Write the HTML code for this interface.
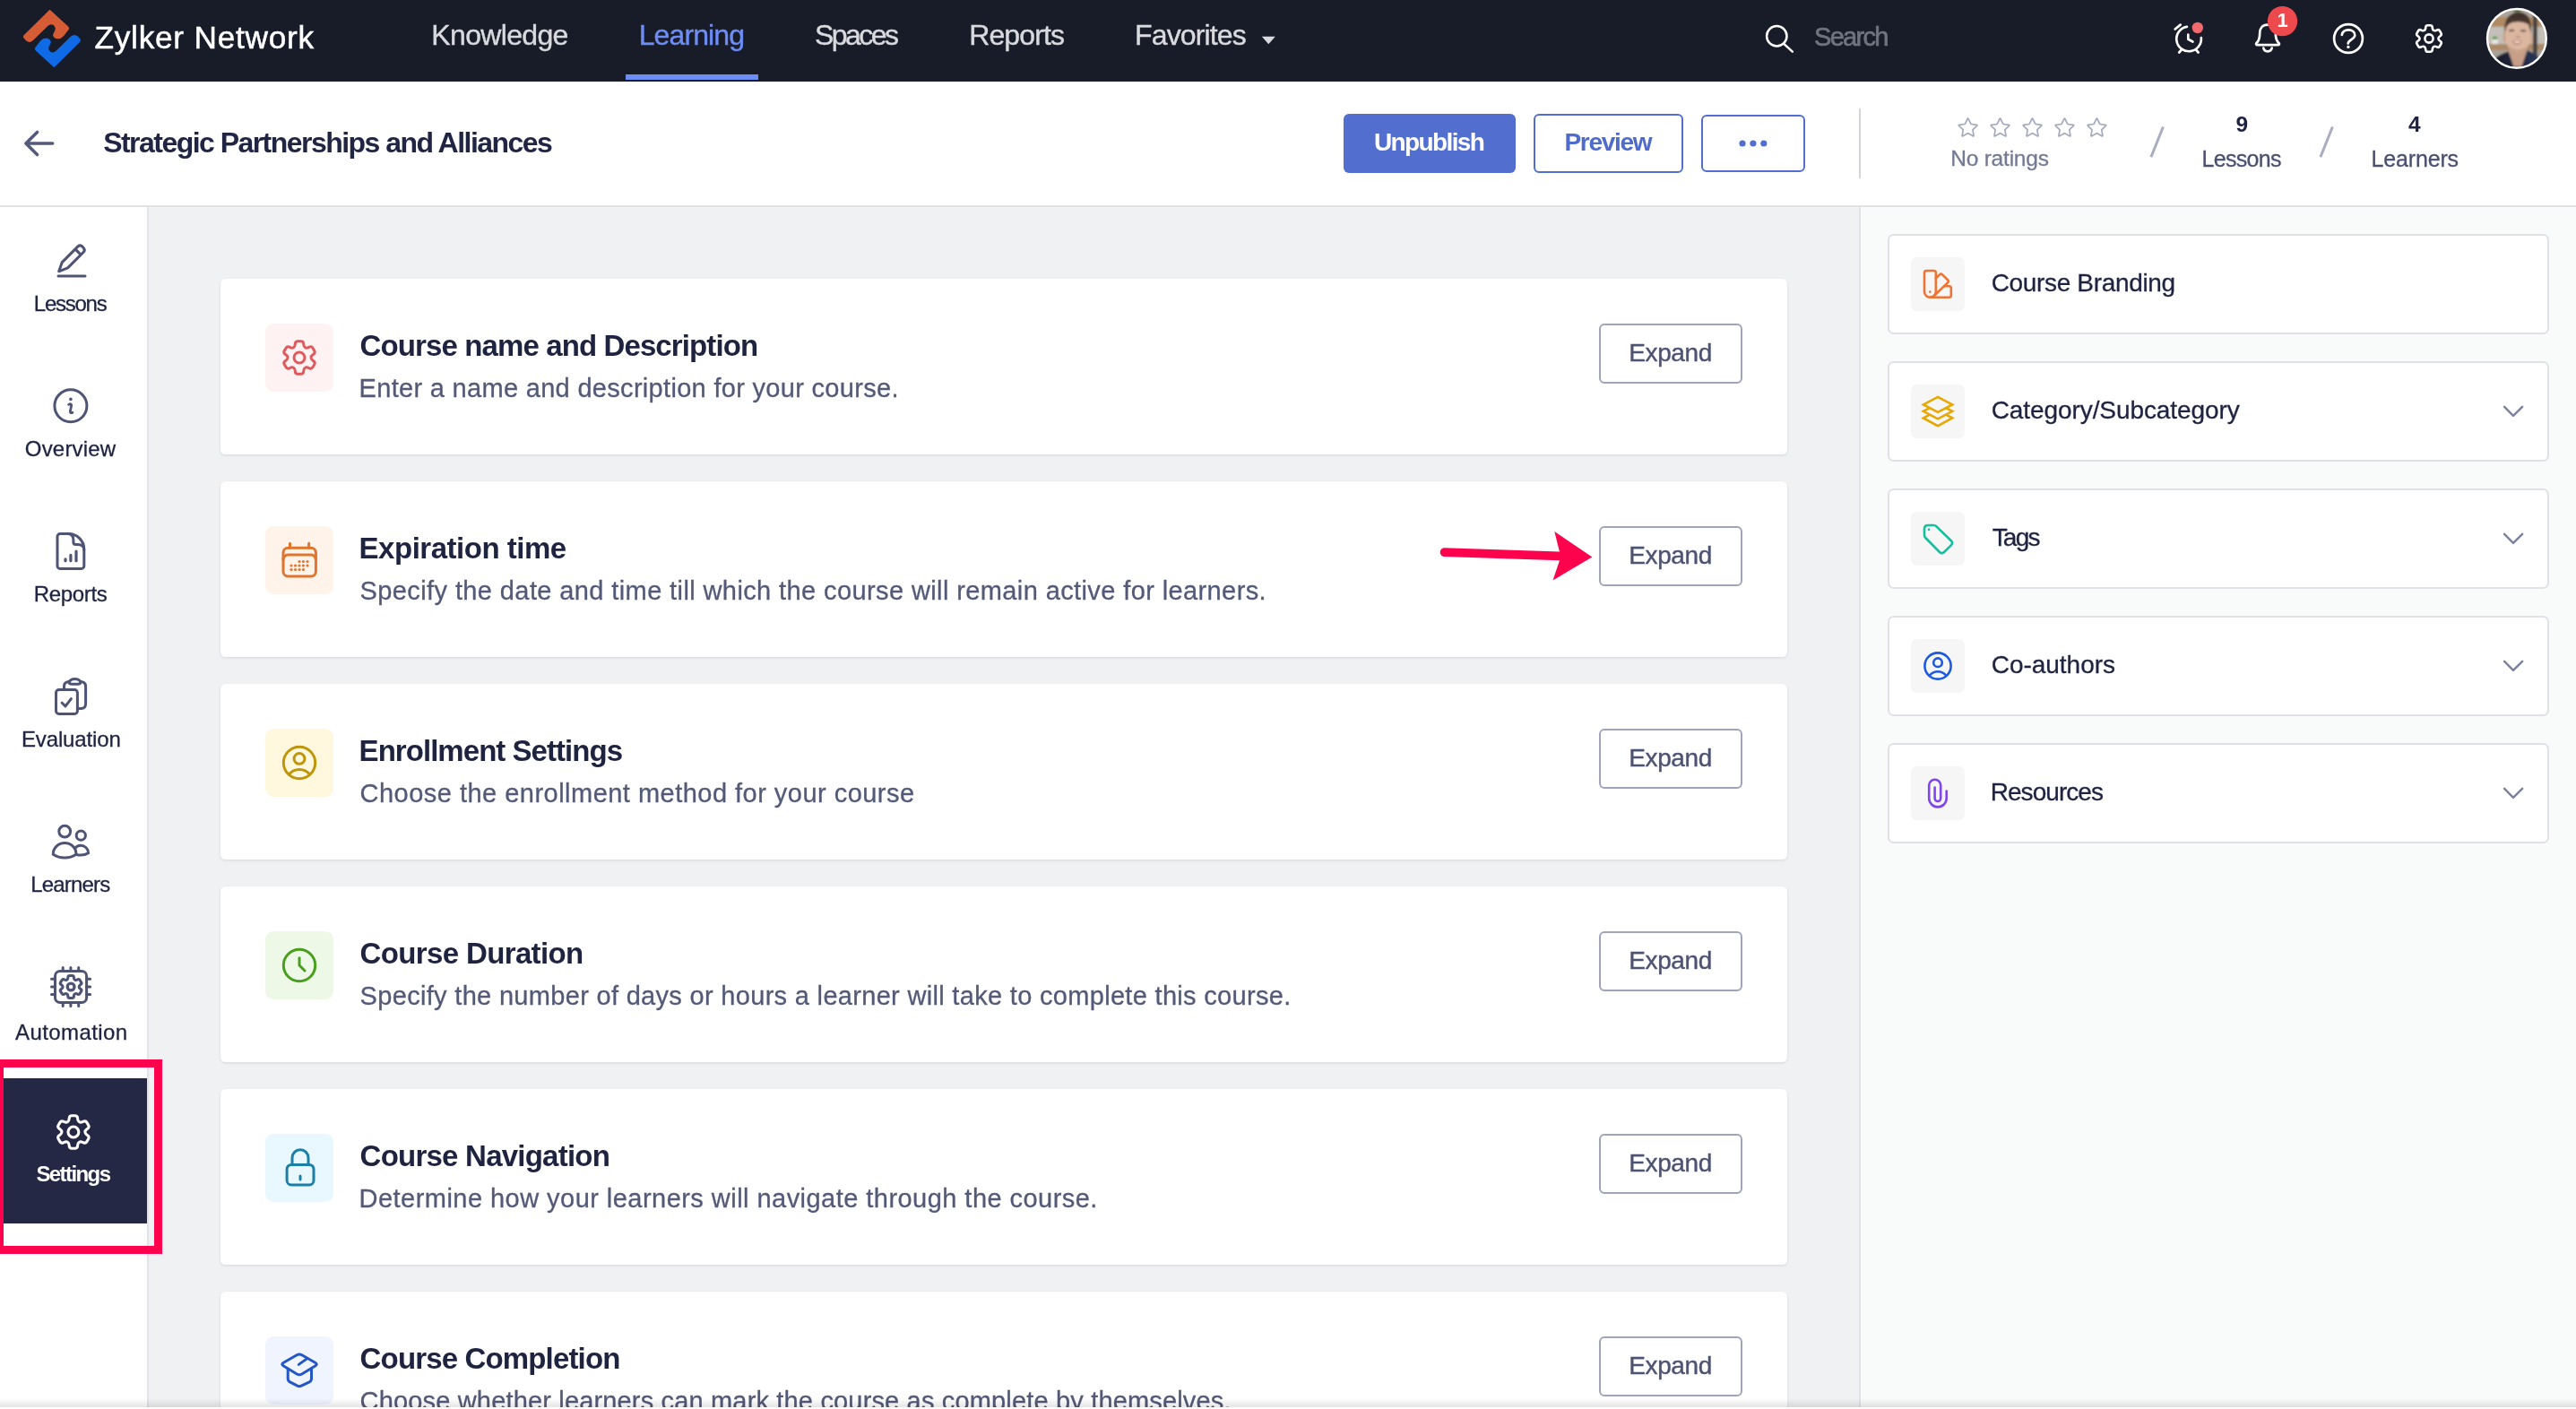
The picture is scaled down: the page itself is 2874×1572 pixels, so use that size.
<!DOCTYPE html>
<html lang="en">
<head>
<meta charset="utf-8">
<title>Zylker Network - Course Settings</title>
<style>
*{box-sizing:border-box;margin:0;padding:0}
html,body{width:2874px;height:1572px;overflow:hidden;background:#fff}
body{position:relative;font-family:"Liberation Sans",sans-serif}
.t{position:absolute;white-space:nowrap;line-height:1;z-index:7}
.abs{position:absolute}
svg{position:absolute;overflow:visible}
#hdr{position:absolute;left:0;top:0;width:2874px;height:91px;background:#181b28}
#navline{position:absolute;left:698px;top:83px;width:148px;height:6px;background:#6d8df6}
#sub{position:absolute;left:0;top:91px;width:2874px;height:140px;background:#fff;border-bottom:2px solid #e1e2e7}
#side{position:absolute;left:0;top:231px;width:166px;height:1341px;background:#fff;border-right:2px solid #e2e3e8}
#main{position:absolute;left:166px;top:231px;width:1908px;height:1341px;background:#f0f1f3}
#right{position:absolute;left:2074px;top:231px;width:800px;height:1341px;background:#f9fafa;border-left:2px solid #e2e3e8}
.card{position:absolute;left:246px;width:1748px;height:196px;background:#fff;border-radius:5.5px;box-shadow:0 1px 3px rgba(30,35,64,.13)}
.ib{position:absolute;left:50px;top:50px;width:76px;height:76px;border-radius:9px}
.exp{position:absolute;left:1538px;top:50px;width:160px;height:67px;border:2px solid #a0a4b8;border-radius:6px;background:#fff}
.rc{position:absolute;left:2106px;width:738px;height:112px;background:#fff;border:2px solid #e0e1e7;border-radius:6.5px}
.rib{position:absolute;left:24px;top:24px;width:60px;height:60px;border-radius:6.5px;background:#f6f6f7}
.btn{position:absolute;border-radius:6px}
#setact{position:absolute;left:0;top:1203px;width:164px;height:162px;background:#242844}
#redbox{position:absolute;left:-5px;top:1182.3px;width:186px;height:217.2px;border:9.3px solid #fd024d;z-index:9}
#botshade{position:absolute;left:0;top:1560px;width:2874px;height:10px;background:linear-gradient(to bottom,rgba(0,0,0,0),rgba(0,0,0,.10));z-index:20}
#botwhite{position:absolute;left:0;top:1570px;width:2874px;height:2px;background:#fff;z-index:21}

#txt{position:absolute;left:0;top:0;width:2874px;height:1572px;z-index:7;will-change:transform}

</style>
</head>
<body>
<div id="hdr"></div>
<div id="navline"></div>
<div id="sub"></div>
<div id="side"></div>
<div id="main"></div>
<div id="right"></div>

<!-- action buttons -->
<div class="btn" style="left:1499px;top:127px;width:192px;height:66px;background:#526ecf"></div>
<div class="btn" style="left:1711px;top:127px;width:167px;height:66px;border:2px solid #526ecf;background:#fff"></div>
<div class="btn" style="left:1898px;top:128px;width:116px;height:64px;border:2px solid #526ecf;background:#fff"></div>
<div class="abs" style="left:2074px;top:121px;width:2px;height:78px;background:#d3d4db"></div>

<!-- cards -->
<div class="card" style="top:311px"><div class="ib" style="background:#fef3f2"></div><div class="exp"></div></div>
<div class="card" style="top:537px"><div class="ib" style="background:#fff3ea"></div><div class="exp"></div></div>
<div class="card" style="top:763px"><div class="ib" style="background:#fff8de"></div><div class="exp"></div></div>
<div class="card" style="top:989px"><div class="ib" style="background:#edf8e7"></div><div class="exp"></div></div>
<div class="card" style="top:1215px"><div class="ib" style="background:#e8f8fe"></div><div class="exp"></div></div>
<div class="card" style="top:1441px"><div class="ib" style="background:#f0f4fe"></div><div class="exp"></div></div>

<!-- right cards -->
<div class="rc" style="top:261px"><div class="rib"></div></div>
<div class="rc" style="top:403px"><div class="rib"></div></div>
<div class="rc" style="top:545px"><div class="rib"></div></div>
<div class="rc" style="top:687px"><div class="rib"></div></div>
<div class="rc" style="top:829px"><div class="rib"></div></div>

<div id="setact"></div>
<div id="redbox"></div>

<!-- ICONS -->
<svg id="icons" width="2874" height="1572" viewBox="0 0 2874 1572" style="left:0;top:0;z-index:6" fill="none" stroke-linecap="round" stroke-linejoin="round">
<!-- logo -->
<g transform="translate(15,0) scale(0.06386)" stroke="none">
  <path id="lg" fill="#d65c36" d="M640 172 L960 465 Q985 490 962 520 L880 625 Q800 710 720 660 Q670 620 705 570 Q760 490 700 440 Q650 410 600 455 L340 710 Q280 760 220 710 L185 670 Q155 640 190 605 L610 190 Q625 172 640 172 Z"/>
  <path fill="#0f6ae6" transform="rotate(180 672.5 672.5)" d="M640 172 L960 465 Q985 490 962 520 L880 625 Q800 710 720 660 Q670 620 705 570 Q760 490 700 440 Q650 410 600 455 L340 710 Q280 760 220 710 L185 670 Q155 640 190 605 L610 190 Q625 172 640 172 Z"/>
</g>
<!-- favorites caret -->
<path d="M1407.8 40.8 H1422.8 L1415.3 49.2 Z" fill="#d9dade" stroke="none"/>
<!-- search -->
<g stroke="#fff" stroke-width="2.5">
  <circle cx="1982.3" cy="40.2" r="11.2"/>
  <path d="M1990.5 49.1 L1999.8 57.7"/>
</g>
<!-- alarm -->
<g stroke="#fff" stroke-width="2.7">
  <path d="M2455.8 42 A13.8 13.8 0 1 1 2439.9 29.8"/>
  <path d="M2426.7 32.5 L2432.7 27.6"/>
  <path d="M2441.3 38.7 V43.8 L2446.4 46.5"/>
  <path d="M2431.2 58.5 L2433.6 55.8 M2452.6 58.5 L2450.3 55.8"/>
</g>
<circle cx="2451.8" cy="31" r="6.2" fill="#f06a6e" stroke="none"/>
<!-- bell -->
<g stroke="#fff" stroke-width="2.7">
  <path d="M2530 27.6 C2524 27.6 2521.2 32 2521.2 37 C2521.2 43 2520.5 45.5 2517.6 48 C2516.6 49 2517.2 50.2 2518.6 50.2 H2541.4 C2542.8 50.2 2543.4 49 2542.4 48 C2539.5 45.5 2538.8 43 2538.8 37 C2538.8 32 2536 27.6 2530 27.6 Z"/>
  <path d="M2525.3 53.6 A4.8 4.8 0 0 0 2534.7 53.6"/>
</g>
<circle cx="2546.5" cy="23.6" r="16.7" fill="#ee4a4d" stroke="none"/>
<!-- help -->
<g stroke="#fff" stroke-width="2.7">
  <circle cx="2620" cy="43" r="15.9"/>
  <path d="M2612.8 38.9 C2613.5 35.3 2616.5 33.4 2620.2 33.4 C2624.3 33.4 2627.3 35.8 2627.3 39.3 C2627.3 43.5 2619.7 44.8 2619.7 48.6"/>
</g>
<circle cx="2619.9" cy="52.4" r="1.7" fill="#fff" stroke="none"/>
<!-- header gear -->
<g stroke="#fff" stroke-width="2.6">
  <path d="M2704.78 33.97 Q2705.97 33.28 2706.17 31.29 L2706.26 30.46 Q2706.47 28.30 2708.64 28.30 L2711.36 28.30 Q2713.53 28.30 2713.74 30.46 L2713.83 31.29 Q2714.03 33.28 2715.22 33.97 L2715.22 33.97 Q2716.40 34.65 2718.23 33.83 L2718.98 33.49 Q2720.96 32.60 2722.05 34.48 L2723.41 36.83 Q2724.49 38.71 2722.73 39.97 L2722.06 40.46 Q2720.43 41.63 2720.43 43.00 L2720.43 43.00 Q2720.43 44.37 2722.06 45.54 L2722.73 46.03 Q2724.49 47.29 2723.41 49.17 L2722.05 51.52 Q2720.96 53.40 2718.98 52.51 L2718.23 52.17 Q2716.40 51.35 2715.22 52.03 L2715.22 52.03 Q2714.03 52.72 2713.83 54.71 L2713.74 55.54 Q2713.53 57.70 2711.36 57.70 L2708.64 57.70 Q2706.47 57.70 2706.26 55.54 L2706.17 54.71 Q2705.97 52.72 2704.78 52.03 L2704.78 52.03 Q2703.60 51.35 2701.77 52.17 L2701.02 52.51 Q2699.04 53.40 2697.95 51.52 L2696.59 49.17 Q2695.51 47.29 2697.27 46.03 L2697.94 45.54 Q2699.57 44.37 2699.57 43.00 L2699.57 43.00 Q2699.57 41.63 2697.94 40.46 L2697.27 39.97 Q2695.51 38.71 2696.59 36.83 L2697.95 34.48 Q2699.04 32.60 2701.02 33.49 L2701.77 33.83 Q2703.60 34.65 2704.78 33.97 Z"/>
  <circle cx="2710" cy="43" r="4.6"/>
</g>
<!-- avatar -->
<defs>
  <clipPath id="avc"><circle cx="2807.9" cy="42.9" r="33"/></clipPath>
  <filter id="avb" x="-10%" y="-10%" width="120%" height="120%"><feGaussianBlur stdDeviation="20"/></filter>
  <linearGradient id="avshirt" x1="0" x2="1" y1="0" y2="0"><stop offset="0" stop-color="#171a26"/><stop offset="0.55" stop-color="#1f2740"/><stop offset="1" stop-color="#2e3c61"/></linearGradient>
  <linearGradient id="avhair" x1="0" x2="0" y1="0" y2="1"><stop offset="0" stop-color="#3c2e29"/><stop offset="1" stop-color="#5b463b"/></linearGradient>
</defs>
<g clip-path="url(#avc)" stroke="none">
 <g transform="translate(2768,2) scale(0.056786)" filter="url(#avb)">
  <rect x="60" y="80" width="1300" height="1300" fill="#b3aaa0"/>
  <rect x="60" y="80" width="1300" height="230" fill="#aaa49c"/>
  <rect x="60" y="300" width="1300" height="190" fill="#b08a62"/>
  <rect x="60" y="490" width="1300" height="340" fill="#c4bfb8"/>
  <rect x="60" y="830" width="1300" height="120" fill="#ad8a66"/>
  <rect x="60" y="950" width="1300" height="430" fill="#a9a198"/>
  <rect x="1020" y="250" width="85" height="900" fill="#45413f"/>
  <ellipse cx="710" cy="175" rx="80" ry="25" fill="#4b6b2c"/>
  <rect x="215" y="735" width="120" height="95" rx="14" fill="#e6e6e6"/>
  <path d="M220 740 Q230 650 270 690 Q300 640 325 740 Z" fill="#5b9a3c"/>
  <!-- shirt -->
  <path d="M250 1130 Q400 1010 560 975 L720 1290 L900 950 Q1060 1010 1160 1110 L1200 1400 L200 1400 Z" fill="url(#avshirt)"/>
  <!-- neck -->
  <path d="M560 880 L900 880 L905 960 L800 1270 L640 1270 L545 990 Z" fill="#c79f88"/>
  <!-- ears -->
  <ellipse cx="465" cy="700" rx="32" ry="95" fill="#c99f87"/>
  <ellipse cx="985" cy="720" rx="36" ry="100" fill="#d2a88f"/>
  <!-- face -->
  <path d="M470 560 Q470 330 720 330 Q970 330 975 560 Q985 800 900 910 Q800 1000 720 1000 Q620 1000 545 900 Q470 790 470 560 Z" fill="#dcb7a0"/>
  <!-- hair -->
  <path d="M462 640 Q440 330 600 240 Q760 160 900 260 Q1010 350 985 640 Q960 520 930 440 Q800 370 640 400 Q540 420 500 500 Q475 560 462 640 Z" fill="url(#avhair)"/>
  <!-- brows/eyes -->
  <ellipse cx="600" cy="565" rx="60" ry="22" fill="#7a5e50"/>
  <ellipse cx="830" cy="570" rx="60" ry="22" fill="#7a5e50"/>
  <!-- nose shadow -->
  <ellipse cx="730" cy="690" rx="45" ry="28" fill="#c59982"/>
  <!-- mouth -->
  <path d="M610 770 Q710 740 810 770 Q760 850 690 845 Q640 840 610 770 Z" fill="#b9776a"/>
  <path d="M635 778 Q710 760 790 778 Q740 815 690 812 Q655 808 635 778 Z" fill="#f3ead9"/>
  <!-- stubble shade -->
  <path d="M540 860 Q720 1010 900 870 Q860 990 720 1000 Q600 1000 540 860 Z" fill="#c9a28b"/>
 </g>
</g>
<circle cx="2807.9" cy="42.9" r="32.9" stroke="#fff" stroke-width="2.4"/>

<!-- back arrow -->
<path d="M41.5 147.4 L28.9 160 L41.5 172.6 M29.5 160 H58.7" stroke="#535a7a" stroke-width="3.6"/>
<!-- more dots -->
<g fill="#526ecf" stroke="none"><circle cx="1944" cy="160" r="3.6"/><circle cx="1955.9" cy="160" r="3.6"/><circle cx="1967.8" cy="160" r="3.6"/></g>
<!-- stars -->
<g stroke="#a5a9bd" stroke-width="1.7" stroke-linejoin="round">
  <path d="M2195.08 132.68 Q2195.60 131.60 2196.12 132.68 L2198.76 138.20 Q2198.89 138.47 2199.19 138.51 L2205.25 139.32 Q2206.44 139.48 2205.57 140.30 L2201.14 144.52 Q2200.93 144.73 2200.98 145.03 L2202.08 151.04 Q2202.30 152.22 2201.25 151.65 L2195.86 148.74 Q2195.60 148.60 2195.34 148.74 L2189.95 151.65 Q2188.90 152.22 2189.12 151.04 L2190.22 145.03 Q2190.27 144.73 2190.06 144.52 L2185.63 140.30 Q2184.76 139.48 2185.95 139.32 L2192.01 138.51 Q2192.31 138.47 2192.44 138.20 Z"/><path d="M2230.98 132.68 Q2231.50 131.60 2232.02 132.68 L2234.66 138.20 Q2234.79 138.47 2235.09 138.51 L2241.15 139.32 Q2242.34 139.48 2241.47 140.30 L2237.04 144.52 Q2236.83 144.73 2236.88 145.03 L2237.98 151.04 Q2238.20 152.22 2237.15 151.65 L2231.76 148.74 Q2231.50 148.60 2231.24 148.74 L2225.85 151.65 Q2224.80 152.22 2225.02 151.04 L2226.12 145.03 Q2226.17 144.73 2225.96 144.52 L2221.53 140.30 Q2220.66 139.48 2221.85 139.32 L2227.91 138.51 Q2228.21 138.47 2228.34 138.20 Z"/><path d="M2266.98 132.68 Q2267.50 131.60 2268.02 132.68 L2270.66 138.20 Q2270.79 138.47 2271.09 138.51 L2277.15 139.32 Q2278.34 139.48 2277.47 140.30 L2273.04 144.52 Q2272.83 144.73 2272.88 145.03 L2273.98 151.04 Q2274.20 152.22 2273.15 151.65 L2267.76 148.74 Q2267.50 148.60 2267.24 148.74 L2261.85 151.65 Q2260.80 152.22 2261.02 151.04 L2262.12 145.03 Q2262.17 144.73 2261.96 144.52 L2257.53 140.30 Q2256.66 139.48 2257.85 139.32 L2263.91 138.51 Q2264.21 138.47 2264.34 138.20 Z"/><path d="M2302.88 132.68 Q2303.40 131.60 2303.92 132.68 L2306.56 138.20 Q2306.69 138.47 2306.99 138.51 L2313.05 139.32 Q2314.24 139.48 2313.37 140.30 L2308.94 144.52 Q2308.73 144.73 2308.78 145.03 L2309.88 151.04 Q2310.10 152.22 2309.05 151.65 L2303.66 148.74 Q2303.40 148.60 2303.14 148.74 L2297.75 151.65 Q2296.70 152.22 2296.92 151.04 L2298.02 145.03 Q2298.07 144.73 2297.86 144.52 L2293.43 140.30 Q2292.56 139.48 2293.75 139.32 L2299.81 138.51 Q2300.11 138.47 2300.24 138.20 Z"/><path d="M2338.88 132.68 Q2339.40 131.60 2339.92 132.68 L2342.56 138.20 Q2342.69 138.47 2342.99 138.51 L2349.05 139.32 Q2350.24 139.48 2349.37 140.30 L2344.94 144.52 Q2344.73 144.73 2344.78 145.03 L2345.88 151.04 Q2346.10 152.22 2345.05 151.65 L2339.66 148.74 Q2339.40 148.60 2339.14 148.74 L2333.75 151.65 Q2332.70 152.22 2332.92 151.04 L2334.02 145.03 Q2334.07 144.73 2333.86 144.52 L2329.43 140.30 Q2328.56 139.48 2329.75 139.32 L2335.81 138.51 Q2336.11 138.47 2336.24 138.20 Z"/>
</g>
<!-- slashes -->
<g stroke="#a9adbf" stroke-width="3" stroke-linecap="butt"><path d="M2413.4 141.5 L2399.9 175.2"/><path d="M2602.4 141.5 L2588.9 175.2"/></g>

<!-- sidebar icons -->
<g stroke="#4d5474" stroke-width="3">
  <!-- lessons pencil -->
  <path d="M65.7 302.8 L69.3 292.6 L87 274.9 Q89.4 272.9 91.8 275 L93.3 276.7 Q95.3 279 93.2 281.2 L75.6 298.9 Z"/>
  <path d="M84.4 278.4 L89.6 283.6"/>
  <path d="M65 308 H95"/>
  <!-- overview -->
  <circle cx="78.9" cy="452.8" r="18"/>
  <path d="M76.7 451.4 Q79.6 449.6 79.7 452.3 L78.4 458.6 Q78.2 461.6 80.9 460.3" stroke-width="2.8"/>
  <circle cx="78.9" cy="445.4" r="1.8" fill="#4d5474" stroke="none"/>
  <!-- reports doc -->
  <path d="M67 595.6 H76.5 A17.3 17.3 0 0 1 93.8 612.9 V631.4 a3 3 0 0 1 -3 3 H67 a3 3 0 0 1 -3 -3 V598.6 a3 3 0 0 1 3 -3 Z"/>
  <path d="M76.5 595.6 Q81.9 596.5 81.9 602.5 V605.1 Q81.9 607.6 84.4 607.6 H87 Q93 607.6 93.8 613"/>
  <path d="M73 623.9 V625.7 M78.9 619.4 V625.7 M85 615 V625.7" stroke-width="3.2"/>
  <!-- evaluation -->
  <rect x="62.5" y="769.6" width="23.9" height="26.8" rx="3.2"/>
  <path d="M71.5 769.6 V766 Q71.5 760.6 77 760.4 M89.9 760.4 Q95.6 760.6 95.6 766 V785 Q95.6 790.4 90.5 790.4 H86.4"/>
  <path d="M77 760.6 Q79 757.4 83.5 757.4 Q88 757.4 89.9 760.6 Q89.9 763.3 87 763.3 H80 Q77 763.3 77 760.6 Z"/>
  <path d="M69.2 784.2 L73 787.9 L79.4 779.7"/>
  <!-- learners -->
  <circle cx="72.2" cy="927.6" r="6.4"/>
  <circle cx="90.3" cy="932.2" r="5.1"/>
  <path d="M59.3 953.2 C59.3 946 65 940.5 72.2 940.5 C79.4 940.5 85 946 85 953.2 C81 955.8 76.5 957 72.2 957 C67.8 957 63.3 955.8 59.3 953.2 Z"/>
  <path d="M83.5 946.5 C85 944.5 87.3 943.3 90 943.3 C94.8 943.3 98.6 947 98.6 951.8 C96 953.3 93 954.1 90 954.1 C88.2 954.1 86.5 953.8 85 953.3"/>
  <!-- automation -->
  <rect x="61.5" y="1083.4" width="35.1" height="35.2" rx="5.5"/>
  <path d="M70.2 1079.4 V1083.4 M78.9 1079.4 V1083.4 M87.7 1079.4 V1083.4 M70.2 1118.6 V1122.6 M78.9 1118.6 V1122.6 M87.7 1118.6 V1122.6 M57.5 1092.2 H61.5 M57.5 1100.9 H61.5 M57.5 1109.6 H61.5 M96.6 1092.2 H100.6 M96.6 1100.9 H100.6 M96.6 1109.6 H100.6"/>
  <path d="M74.57 1093.15 Q75.67 1092.51 75.78 1091.09 L75.86 1090.09 Q75.99 1088.53 77.55 1088.53 L80.65 1088.53 Q82.21 1088.53 82.34 1090.09 L82.42 1091.09 Q82.53 1092.51 83.63 1093.15 L83.63 1093.15 Q84.74 1093.78 86.02 1093.17 L86.93 1092.74 Q88.34 1092.07 89.13 1093.43 L90.67 1096.11 Q91.45 1097.46 90.17 1098.35 L89.34 1098.92 Q88.17 1099.73 88.17 1101.00 L88.17 1101.00 Q88.17 1102.27 89.34 1103.08 L90.17 1103.65 Q91.45 1104.54 90.67 1105.89 L89.13 1108.57 Q88.34 1109.93 86.93 1109.26 L86.02 1108.83 Q84.74 1108.22 83.63 1108.85 L83.63 1108.85 Q82.53 1109.49 82.42 1110.91 L82.34 1111.91 Q82.21 1113.47 80.65 1113.47 L77.55 1113.47 Q75.99 1113.47 75.86 1111.91 L75.78 1110.91 Q75.67 1109.49 74.57 1108.85 L74.57 1108.85 Q73.46 1108.22 72.18 1108.83 L71.27 1109.26 Q69.86 1109.93 69.07 1108.57 L67.53 1105.89 Q66.75 1104.54 68.03 1103.65 L68.86 1103.08 Q70.03 1102.27 70.03 1101.00 L70.03 1101.00 Q70.03 1099.73 68.86 1098.92 L68.03 1098.35 Q66.75 1097.46 67.53 1096.11 L69.07 1093.43 Q69.86 1092.07 71.27 1092.74 L72.18 1093.17 Q73.46 1093.78 74.57 1093.15 Z" stroke-width="3.1"/>
  <circle cx="79.1" cy="1101" r="3.9" stroke-width="3.3"/>
</g>
<!-- settings gear (active) -->
<g stroke="#fff" stroke-width="3.1">
  <path d="M75.40 1251.75 Q76.89 1250.89 77.13 1248.41 L77.24 1247.39 Q77.51 1244.70 80.21 1244.70 L83.59 1244.70 Q86.29 1244.70 86.56 1247.39 L86.67 1248.41 Q86.91 1250.89 88.40 1251.75 L88.40 1251.75 Q89.88 1252.60 92.15 1251.58 L93.09 1251.15 Q95.55 1250.04 96.91 1252.38 L98.60 1255.31 Q99.95 1257.65 97.75 1259.23 L96.92 1259.83 Q94.89 1261.29 94.89 1263.00 L94.89 1263.00 Q94.89 1264.71 96.92 1266.17 L97.75 1266.77 Q99.95 1268.35 98.60 1270.69 L96.91 1273.62 Q95.55 1275.96 93.09 1274.85 L92.15 1274.42 Q89.88 1273.40 88.40 1274.25 L88.40 1274.25 Q86.91 1275.11 86.67 1277.59 L86.56 1278.61 Q86.29 1281.30 83.59 1281.30 L80.21 1281.30 Q77.51 1281.30 77.24 1278.61 L77.13 1277.59 Q76.89 1275.11 75.40 1274.25 L75.40 1274.25 Q73.92 1273.40 71.65 1274.42 L70.71 1274.85 Q68.25 1275.96 66.89 1273.62 L65.20 1270.69 Q63.85 1268.35 66.05 1266.77 L66.88 1266.17 Q68.91 1264.71 68.91 1263.00 L68.91 1263.00 Q68.91 1261.29 66.88 1259.83 L66.05 1259.23 Q63.85 1257.65 65.20 1255.31 L66.89 1252.38 Q68.25 1250.04 70.71 1251.15 L71.65 1251.58 Q73.92 1252.60 75.40 1251.75 Z"/>
  <circle cx="81.9" cy="1263" r="5.95"/>
</g>

<!-- card icons -->
<g stroke-width="3">
  <g stroke="#df595d"><path d="M327.50 387.75 Q328.99 386.89 329.23 384.41 L329.34 383.39 Q329.61 380.70 332.31 380.70 L335.69 380.70 Q338.39 380.70 338.66 383.39 L338.77 384.41 Q339.01 386.89 340.50 387.75 L340.50 387.75 Q341.98 388.60 344.25 387.58 L345.19 387.15 Q347.65 386.04 349.01 388.38 L350.70 391.31 Q352.05 393.65 349.85 395.23 L349.02 395.83 Q346.99 397.29 346.99 399.00 L346.99 399.00 Q346.99 400.71 349.02 402.17 L349.85 402.77 Q352.05 404.35 350.70 406.69 L349.01 409.62 Q347.65 411.96 345.19 410.85 L344.25 410.42 Q341.98 409.40 340.50 410.25 L340.50 410.25 Q339.01 411.11 338.77 413.59 L338.66 414.61 Q338.39 417.30 335.69 417.30 L332.31 417.30 Q329.61 417.30 329.34 414.61 L329.23 413.59 Q328.99 411.11 327.50 410.25 L327.50 410.25 Q326.02 409.40 323.75 410.42 L322.81 410.85 Q320.35 411.96 318.99 409.62 L317.30 406.69 Q315.95 404.35 318.15 402.77 L318.98 402.17 Q321.01 400.71 321.01 399.00 L321.01 399.00 Q321.01 397.29 318.98 395.83 L318.15 395.23 Q315.95 393.65 317.30 391.31 L318.99 388.38 Q320.35 386.04 322.81 387.15 L323.75 387.58 Q326.02 388.60 327.50 387.75 Z"/><circle cx="334" cy="399" r="5.95"/></g>
  <g stroke="#e0752e">
    <rect x="316" y="611.3" width="36.4" height="31.7" rx="5.5"/>
    <path d="M316 624.4 a5.4 5.4 0 0 1 5.4 -5.4 h25.6 a5.4 5.4 0 0 1 5.4 5.4"/>
    <path d="M323.5 606.3 V611.3 M344.6 606.3 V611.3"/>
    <g fill="#e0752e" stroke="none">
      <circle cx="334" cy="626.5" r="1.6"/><circle cx="338.4" cy="626.5" r="1.6"/><circle cx="343" cy="626.5" r="1.6"/>
      <circle cx="325" cy="631" r="1.6"/><circle cx="329.5" cy="631" r="1.6"/><circle cx="334" cy="631" r="1.6"/><circle cx="338.4" cy="631" r="1.6"/><circle cx="343" cy="631" r="1.6"/>
      <circle cx="325" cy="635.5" r="1.6"/><circle cx="329.5" cy="635.5" r="1.6"/><circle cx="334" cy="635.5" r="1.6"/><circle cx="338.4" cy="635.5" r="1.6"/>
    </g>
  </g>
  <g stroke="#bf950a">
    <circle cx="334" cy="851" r="17.7"/><circle cx="334" cy="846.4" r="5.95"/>
    <path d="M322.3 864 Q327 858.4 334 858.4 Q341 858.4 345.7 864"/>
  </g>
  <g stroke="#4a9e1e"><circle cx="334" cy="1077" r="17.7"/><path d="M334 1068.8 V1077 L340 1083"/></g>
  <g stroke="#1b7fa6">
    <rect x="320.1" y="1299.4" width="29.9" height="22.6" rx="5"/>
    <path d="M326 1299.4 V1291.7 A9 9 0 0 1 344 1291.7 V1299.4"/>
    <path d="M335 1311.9 V1316"/>
  </g>
  <g stroke="#2456c5">
    <path d="M336.8 1511.8 L351.6 1520.2 Q354.9 1522.1 351.6 1524 L336.8 1533 Q334 1534.7 331.2 1533 L316.4 1524 Q313.1 1522.1 316.4 1520.2 L331.2 1511.8 Q334 1510.2 336.8 1511.8 Z"/>
    <path d="M321.2 1527 V1538 Q321.2 1540.6 323.5 1541.8 L331.8 1546.2 Q334 1547.3 336.2 1546.2 L345.2 1541.8 Q347.5 1540.6 347.5 1538 V1527"/>
    <path d="M333.3 1522.4 L342.4 1515.9"/>
  </g>
</g>

<!-- right panel icons -->
<g stroke-width="2.6">
  <g stroke="#ec7434">
    <path d="M2149.2 302 H2157.6 Q2159.8 302 2159.8 304.2 V325.4 A6.4 6.4 0 0 1 2147 325.4 V304.2 Q2147 302 2149.2 302 Z"/>
    <path d="M2159.8 310.6 L2164 306.4 Q2165.5 304.9 2167 306.4 L2173 312.3 Q2174.5 313.8 2173 315.3 L2157.6 330.2"/>
    <path d="M2169.5 319.3 H2174.6 Q2176.8 319.3 2176.8 321.5 V329.6 Q2176.8 331.8 2174.6 331.8 H2153.4"/>
    <circle cx="2153.3" cy="325.6" r="1.3" fill="#ec7434" stroke="none"/>
  </g>
  <g stroke="#e8a700" stroke-linejoin="miter">
    <path d="M2162 442.9 L2178.2 451.4 L2162 459.9 L2145.9 451.4 Z"/>
    <path d="M2152 455.6 L2145.9 458.8 L2162 467.3 L2178.2 458.8 L2172 455.6"/>
    <path d="M2152 463.2 L2145.9 466.4 L2162 475.2 L2178.2 466.4 L2172 463.2"/>
  </g>
  <g stroke="#12c0a0">
    <path d="M2147 590 Q2147 586 2151 586 H2157.5 Q2159 586 2160.2 587.2 L2176.8 603.3 Q2179.3 605.8 2176.8 608.3 L2169 616 Q2166.5 618.3 2164 616 L2148.2 600 Q2147 598.8 2147 597.3 Z"/>
    <circle cx="2152" cy="590.9" r="1.3" fill="#12c0a0" stroke="none"/>
  </g>
  <g stroke="#1d59e0">
    <circle cx="2162" cy="743" r="14.6"/><circle cx="2162" cy="739.2" r="4.8"/>
    <path d="M2152.7 753.6 Q2156.5 749.3 2162 749.3 Q2167.5 749.3 2171.3 753.6"/>
  </g>
  <g stroke="#8046ec">
    <path d="M2171.7 882.5 V890.6 A9.75 9.75 0 0 1 2152.2 890.6 V876.2 A6.5 6.5 0 0 1 2165.2 876.2 V890.8 A3.3 3.3 0 0 1 2158.6 890.8 V878.5"/>
  </g>
</g>
<!-- chevrons -->
<g stroke="#7d829c" stroke-width="2.5">
  <path d="M2794.1 453.8 L2804 463.8 L2814.1 453.8"/>
  <path d="M2794.1 595.8 L2804 605.8 L2814.1 595.8"/>
  <path d="M2794.1 737.8 L2804 747.8 L2814.1 737.8"/>
  <path d="M2794.1 879.8 L2804 889.8 L2814.1 879.8"/>
</g>
<!-- annotation arrow -->
<g stroke="none" fill="#fd024d">
  <path d="M1611.6 616.1 L1740 620.4" stroke="#fd024d" stroke-width="9.8"/>
  <path d="M1776.3 621.5 L1734.3 593.1 L1740 615.7 L1740 625.3 L1732.5 647.6 Z"/>
</g>

</svg>

<div id="txt">
<span class="t" id="t0" style="left:105.4px;top:23.8px;font-size:35.2px;font-weight:400;color:#ffffff;letter-spacing:0.783px;-webkit-text-stroke:0.5px #fff;">Zylker Network</span>
<span class="t" id="t1" style="left:481.3px;top:23.4px;font-size:32px;font-weight:400;color:#d9dade;letter-spacing:-0.656px;-webkit-text-stroke:0.4px;">Knowledge</span>
<span class="t" id="t2" style="left:712.7px;top:23.4px;font-size:32px;font-weight:400;color:#6d8df6;letter-spacing:-0.893px;-webkit-text-stroke:0.4px;">Learning</span>
<span class="t" id="t3" style="left:908.9px;top:23.4px;font-size:32px;font-weight:400;color:#d9dade;letter-spacing:-2.507px;-webkit-text-stroke:0.4px;">Spaces</span>
<span class="t" id="t4" style="left:1081.2px;top:23.4px;font-size:32px;font-weight:400;color:#d9dade;letter-spacing:-0.874px;-webkit-text-stroke:0.4px;">Reports</span>
<span class="t" id="t5" style="left:1266.1px;top:23.4px;font-size:32px;font-weight:400;color:#d9dade;letter-spacing:-0.862px;-webkit-text-stroke:0.4px;">Favorites</span>
<span class="t" id="t6" style="left:2024.1px;top:27.4px;font-size:29px;font-weight:400;color:#70747f;letter-spacing:-1.731px;-webkit-text-stroke:0.7px #70747f;">Search</span>
<span class="t" id="t7" style="left:2540.5px;top:12.4px;font-size:22px;font-weight:700;color:#ffffff;letter-spacing:0.000px;">1</span>
<span class="t" id="t8" style="left:115.2px;top:142.6px;font-size:32px;font-weight:700;color:#1f2542;letter-spacing:-1.538px;">Strategic Partnerships and Alliances</span>
<span class="t" id="t9" style="left:1532.9px;top:145.1px;font-size:28px;font-weight:700;color:#ffffff;letter-spacing:-1.608px;">Unpublish</span>
<span class="t" id="t10" style="left:1745.5px;top:145.1px;font-size:28px;font-weight:700;color:#4f6bcc;letter-spacing:-1.311px;">Preview</span>
<span class="t" id="t11" style="left:2176.2px;top:165.3px;font-size:24.5px;font-weight:400;color:#747a94;letter-spacing:-0.212px;-webkit-text-stroke:0.3px;">No ratings</span>
<span class="t" id="t12" style="left:2494.6px;top:127.0px;font-size:24.5px;font-weight:700;color:#1e2340;letter-spacing:0.000px;">9</span>
<span class="t" id="t13" style="left:2456.4px;top:165.4px;font-size:25px;font-weight:400;color:#4a5070;letter-spacing:-0.653px;-webkit-text-stroke:0.3px;">Lessons</span>
<span class="t" id="t14" style="left:2686.9px;top:127.0px;font-size:24.5px;font-weight:700;color:#1e2340;letter-spacing:0.000px;">4</span>
<span class="t" id="t15" style="left:2645.4px;top:165.4px;font-size:25px;font-weight:400;color:#4a5070;letter-spacing:-0.138px;-webkit-text-stroke:0.3px;">Learners</span>
<span class="t" id="t16" style="left:37.8px;top:327.0px;font-size:24px;font-weight:400;color:#1e2340;letter-spacing:-1.248px;-webkit-text-stroke:0.3px;">Lessons</span>
<span class="t" id="t17" style="left:27.8px;top:488.5px;font-size:24px;font-weight:400;color:#1e2340;letter-spacing:0.195px;-webkit-text-stroke:0.3px;">Overview</span>
<span class="t" id="t18" style="left:37.8px;top:650.5px;font-size:24px;font-weight:400;color:#1e2340;letter-spacing:-0.356px;-webkit-text-stroke:0.3px;">Reports</span>
<span class="t" id="t19" style="left:24.0px;top:812.7px;font-size:24px;font-weight:400;color:#1e2340;letter-spacing:-0.148px;-webkit-text-stroke:0.3px;">Evaluation</span>
<span class="t" id="t20" style="left:34.2px;top:974.7px;font-size:24px;font-weight:400;color:#1e2340;letter-spacing:-0.803px;-webkit-text-stroke:0.3px;">Learners</span>
<span class="t" id="t21" style="left:17.0px;top:1139.7px;font-size:24px;font-weight:400;color:#1e2340;letter-spacing:0.405px;-webkit-text-stroke:0.3px;">Automation</span>
<span class="t" id="t22" style="left:40.4px;top:1298.3px;font-size:24px;font-weight:700;color:#ffffff;letter-spacing:-1.575px;">Settings</span>
<span class="t" id="t23" style="left:401.6px;top:368.7px;font-size:33px;font-weight:700;color:#1e2340;letter-spacing:-0.887px;">Course name and Description</span>
<span class="t" id="t24" style="left:400.6px;top:419.2px;font-size:29px;font-weight:400;color:#535a78;letter-spacing:0.307px;-webkit-text-stroke:0.3px;">Enter a name and description for your course.</span>
<span class="t" id="t25" style="left:1817.3px;top:379.6px;font-size:28px;font-weight:400;color:#4d5372;letter-spacing:-0.399px;-webkit-text-stroke:0.4px #4d5372;">Expand</span>
<span class="t" id="t26" style="left:400.6px;top:594.7px;font-size:33px;font-weight:700;color:#1e2340;letter-spacing:-0.488px;">Expiration time</span>
<span class="t" id="t27" style="left:401.6px;top:645.2px;font-size:29px;font-weight:400;color:#535a78;letter-spacing:0.393px;-webkit-text-stroke:0.3px;">Specify the date and time till which the course will remain active for learners.</span>
<span class="t" id="t28" style="left:1817.3px;top:605.6px;font-size:28px;font-weight:400;color:#4d5372;letter-spacing:-0.399px;-webkit-text-stroke:0.4px #4d5372;">Expand</span>
<span class="t" id="t29" style="left:400.6px;top:820.7px;font-size:33px;font-weight:700;color:#1e2340;letter-spacing:-0.958px;">Enrollment Settings</span>
<span class="t" id="t30" style="left:401.6px;top:871.2px;font-size:29px;font-weight:400;color:#535a78;letter-spacing:0.476px;-webkit-text-stroke:0.3px;">Choose the enrollment method for your course</span>
<span class="t" id="t31" style="left:1817.3px;top:831.6px;font-size:28px;font-weight:400;color:#4d5372;letter-spacing:-0.399px;-webkit-text-stroke:0.4px #4d5372;">Expand</span>
<span class="t" id="t32" style="left:401.6px;top:1046.7px;font-size:33px;font-weight:700;color:#1e2340;letter-spacing:-0.640px;">Course Duration</span>
<span class="t" id="t33" style="left:401.6px;top:1097.2px;font-size:29px;font-weight:400;color:#535a78;letter-spacing:0.314px;-webkit-text-stroke:0.3px;">Specify the number of days or hours a learner will take to complete this course.</span>
<span class="t" id="t34" style="left:1817.3px;top:1057.6px;font-size:28px;font-weight:400;color:#4d5372;letter-spacing:-0.399px;-webkit-text-stroke:0.4px #4d5372;">Expand</span>
<span class="t" id="t35" style="left:401.6px;top:1272.7px;font-size:33px;font-weight:700;color:#1e2340;letter-spacing:-0.768px;">Course Navigation</span>
<span class="t" id="t36" style="left:400.6px;top:1323.2px;font-size:29px;font-weight:400;color:#535a78;letter-spacing:0.459px;-webkit-text-stroke:0.3px;">Determine how your learners will navigate through the course.</span>
<span class="t" id="t37" style="left:1817.3px;top:1283.6px;font-size:28px;font-weight:400;color:#4d5372;letter-spacing:-0.399px;-webkit-text-stroke:0.4px #4d5372;">Expand</span>
<span class="t" id="t38" style="left:401.6px;top:1498.7px;font-size:33px;font-weight:700;color:#1e2340;letter-spacing:-0.849px;">Course Completion</span>
<span class="t" id="t39" style="left:401.6px;top:1549.2px;font-size:29px;font-weight:400;color:#535a78;letter-spacing:0.163px;-webkit-text-stroke:0.3px;">Choose whether learners can mark the course as complete by themselves.</span>
<span class="t" id="t40" style="left:1817.3px;top:1509.6px;font-size:28px;font-weight:400;color:#4d5372;letter-spacing:-0.399px;-webkit-text-stroke:0.4px #4d5372;">Expand</span>
<span class="t" id="t41" style="left:2221.7px;top:302.1px;font-size:28px;font-weight:400;color:#1e2340;letter-spacing:-0.339px;-webkit-text-stroke:0.3px;">Course Branding</span>
<span class="t" id="t42" style="left:2221.7px;top:444.1px;font-size:28px;font-weight:400;color:#1e2340;letter-spacing:-0.084px;-webkit-text-stroke:0.3px;">Category/Subcategory</span>
<span class="t" id="t43" style="left:2222.7px;top:586.1px;font-size:28px;font-weight:400;color:#1e2340;letter-spacing:-1.815px;-webkit-text-stroke:0.3px;">Tags</span>
<span class="t" id="t44" style="left:2221.7px;top:728.1px;font-size:28px;font-weight:400;color:#1e2340;letter-spacing:-0.023px;-webkit-text-stroke:0.3px;">Co-authors</span>
<span class="t" id="t45" style="left:2220.7px;top:870.1px;font-size:28px;font-weight:400;color:#1e2340;letter-spacing:-0.942px;-webkit-text-stroke:0.3px;">Resources</span>
</div>
<div id="botshade"></div>
<div id="botwhite"></div>

</body>
</html>
